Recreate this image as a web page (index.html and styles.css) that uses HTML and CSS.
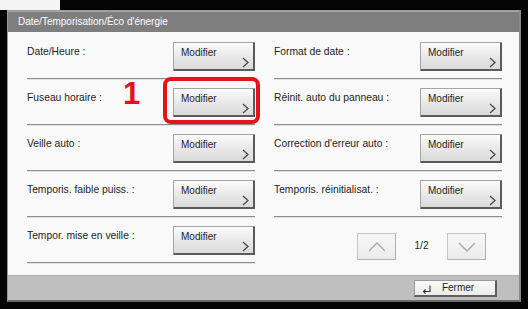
FILE: index.html
```html
<!DOCTYPE html>
<html lang="fr">
<head>
<meta charset="utf-8">
<title>Date/Temporisation/Éco d'énergie</title>
<link rel="stylesheet" href="styles.css">
</head>
<body>
<div class="screen">
  <div class="panel">
    <div class="titlebar">Date/Temporisation/Éco d'énergie</div>
    <div class="content">
      <div class="col">
        <div class="row">
          <span class="label">Date/Heure :</span>
          <button class="btn">Modifier<svg class="chev" width="7" height="11" viewBox="0 0 7 11"><polyline points="1,1 6,5.5 1,10" /></svg></button>
        </div>
        <div class="row row-marked">
          <span class="step">1</span>
          <span class="label">Fuseau horaire :</span>
          <div class="btn-wrap">
            <button class="btn">Modifier<svg class="chev" width="7" height="11" viewBox="0 0 7 11"><polyline points="1,1 6,5.5 1,10" /></svg></button>
            <span class="highlight"></span>
          </div>
        </div>
        <div class="row">
          <span class="label">Veille auto :</span>
          <button class="btn">Modifier<svg class="chev" width="7" height="11" viewBox="0 0 7 11"><polyline points="1,1 6,5.5 1,10" /></svg></button>
        </div>
        <div class="row">
          <span class="label">Temporis. faible puiss. :</span>
          <button class="btn">Modifier<svg class="chev" width="7" height="11" viewBox="0 0 7 11"><polyline points="1,1 6,5.5 1,10" /></svg></button>
        </div>
        <div class="row">
          <span class="label">Tempor. mise en veille :</span>
          <button class="btn">Modifier<svg class="chev" width="7" height="11" viewBox="0 0 7 11"><polyline points="1,1 6,5.5 1,10" /></svg></button>
        </div>
      </div>
      <div class="col">
        <div class="row">
          <span class="label">Format de date :</span>
          <button class="btn">Modifier<svg class="chev" width="7" height="11" viewBox="0 0 7 11"><polyline points="1,1 6,5.5 1,10" /></svg></button>
        </div>
        <div class="row">
          <span class="label">Réinit. auto du panneau :</span>
          <button class="btn">Modifier<svg class="chev" width="7" height="11" viewBox="0 0 7 11"><polyline points="1,1 6,5.5 1,10" /></svg></button>
        </div>
        <div class="row">
          <span class="label">Correction d'erreur auto :</span>
          <button class="btn">Modifier<svg class="chev" width="7" height="11" viewBox="0 0 7 11"><polyline points="1,1 6,5.5 1,10" /></svg></button>
        </div>
        <div class="row">
          <span class="label">Temporis. réinitialisat. :</span>
          <button class="btn">Modifier<svg class="chev" width="7" height="11" viewBox="0 0 7 11"><polyline points="1,1 6,5.5 1,10" /></svg></button>
        </div>
        <div class="pager">
          <button class="pg"><svg width="20" height="12" viewBox="0 0 20 12"><polyline points="2,10 10,2 18,10" /></svg></button>
          <span class="pg-num">1/2</span>
          <button class="pg"><svg width="20" height="12" viewBox="0 0 20 12"><polyline points="2,2 10,10 18,2" /></svg></button>
        </div>
      </div>
    </div>
    <div class="footer">
      <button class="close"><svg class="enter" width="10" height="9" viewBox="0 0 10 9"><polyline points="8,0.5 8,6.5 1.5,6.5" /><polyline points="3.5,4.5 1.5,6.5 3.5,8.5" /></svg><span>Fermer</span></button>
    </div>
  </div>
</div>
</body>
</html>
```

FILE: styles.css
```css
* { box-sizing: border-box; }

html, body {
  margin: 0;
  padding: 0;
}

body {
  width: 528px;
  height: 309px;
  overflow: hidden;
  background:
    linear-gradient(#f4f4f4, #f4f4f4) 0 0 / 60px 10px no-repeat,
    #050505;
  font-family: "Liberation Sans", Arial, sans-serif;
  font-size: 10px;
  color: #1e1e1e;
}

.screen {
  padding: 10px 7px 7px 7px;
  height: 309px;
}

.panel {
  height: 292px;
  display: flex;
  flex-direction: column;
  border: 1px solid #9a9a9a;
  border-right: 2px solid #8a8a8a;
  border-bottom: 2px solid #6a6a6a;
  background: #f9f9f9;
}

.titlebar {
  height: 21px;
  background: #7e7e7e;
  border-top: 1px solid #a8a8a8;
  color: #fff;
  line-height: 20px;
  padding-left: 10px;
  font-size: 10px;
}

.content {
  flex: 1;
  display: grid;
  grid-template-columns: 228px 228px;
  column-gap: 19px;
  padding: 1px 0 0 19px;
}

.col {
  display: flex;
  flex-direction: column;
}

.row {
  position: relative;
  height: 46px;
  display: flex;
  justify-content: space-between;
  align-items: flex-start;
  padding-top: 9px;
  border-bottom: 1px solid #8c8c8c;
  box-shadow: 0 1px 0 #e2e2e2;
}

.label {
  padding-top: 4px;
  line-height: 12px;
  font-size: 10.3px;
}

.btn {
  position: relative;
  width: 82px;
  height: 29px;
  margin: 0;
  padding: 4px 0 0 7px;
  font-family: inherit;
  font-size: 10px;
  line-height: 12px;
  color: #1e1e1e;
  background: linear-gradient(#fbfbfb, #e6e6e6 60%, #dadada);
  border: 1px solid #a4a4a4;
  border-right: 2px solid #5a5a5a;
  border-bottom: 2px solid #5a5a5a;
  border-radius: 1px;
  display: flex;
  align-items: flex-start;
  justify-content: flex-start;
}

.chev {
  position: absolute;
  right: 4px;
  bottom: 1px;
  fill: none;
  stroke: #4a4a4a;
  stroke-width: 1.3;
}

.btn-wrap {
  position: relative;
}

.highlight {
  position: absolute;
  left: -10px;
  top: -11px;
  right: -5px;
  bottom: -7px;
  border: 4px solid #e3131b;
  border-radius: 8px;
}

.step {
  position: absolute;
  left: 96px;
  top: 0;
  font-size: 31px;
  line-height: 30px;
  font-weight: bold;
  color: #e3131b;
}

.pager {
  display: flex;
  justify-content: flex-end;
  align-items: flex-start;
  padding-top: 16px;
  padding-right: 16px;
}

.pg {
  width: 39px;
  height: 27px;
  margin: 0;
  padding: 0;
  background: linear-gradient(#f7f7f7, #ececec);
  border: 1px solid #c4c4c4;
  border-right-color: #b0b0b0;
  border-bottom-color: #b0b0b0;
  display: flex;
  align-items: center;
  justify-content: center;
}

.pg svg {
  fill: none;
  stroke: #a8a8a8;
  stroke-width: 1.3;
}

.pg-num {
  width: 51px;
  text-align: center;
  line-height: 12px;
  padding-top: 7px;
}

.footer {
  height: 25px;
  background: #bfbfbf;
  border-top: 1px solid #b0b0b0;
  display: flex;
  justify-content: flex-end;
  align-items: flex-start;
  padding: 4px 22px 0 0;
}

.close {
  position: relative;
  width: 83px;
  height: 17px;
  margin: 0;
  padding: 0;
  font-family: inherit;
  font-size: 10px;
  color: #1e1e1e;
  background: linear-gradient(#fafafa, #ebebeb);
  border: 1px solid #9a9a9a;
  border-right: 2px solid #5e5e5e;
  border-bottom: 2px solid #5e5e5e;
  display: flex;
  align-items: center;
  justify-content: center;
  line-height: 12px;
}

.close span {
  margin-left: 6px;
}

.enter {
  position: absolute;
  left: 7px;
  top: 4px;
  fill: none;
  stroke: #333;
  stroke-width: 1.1;
}
```
